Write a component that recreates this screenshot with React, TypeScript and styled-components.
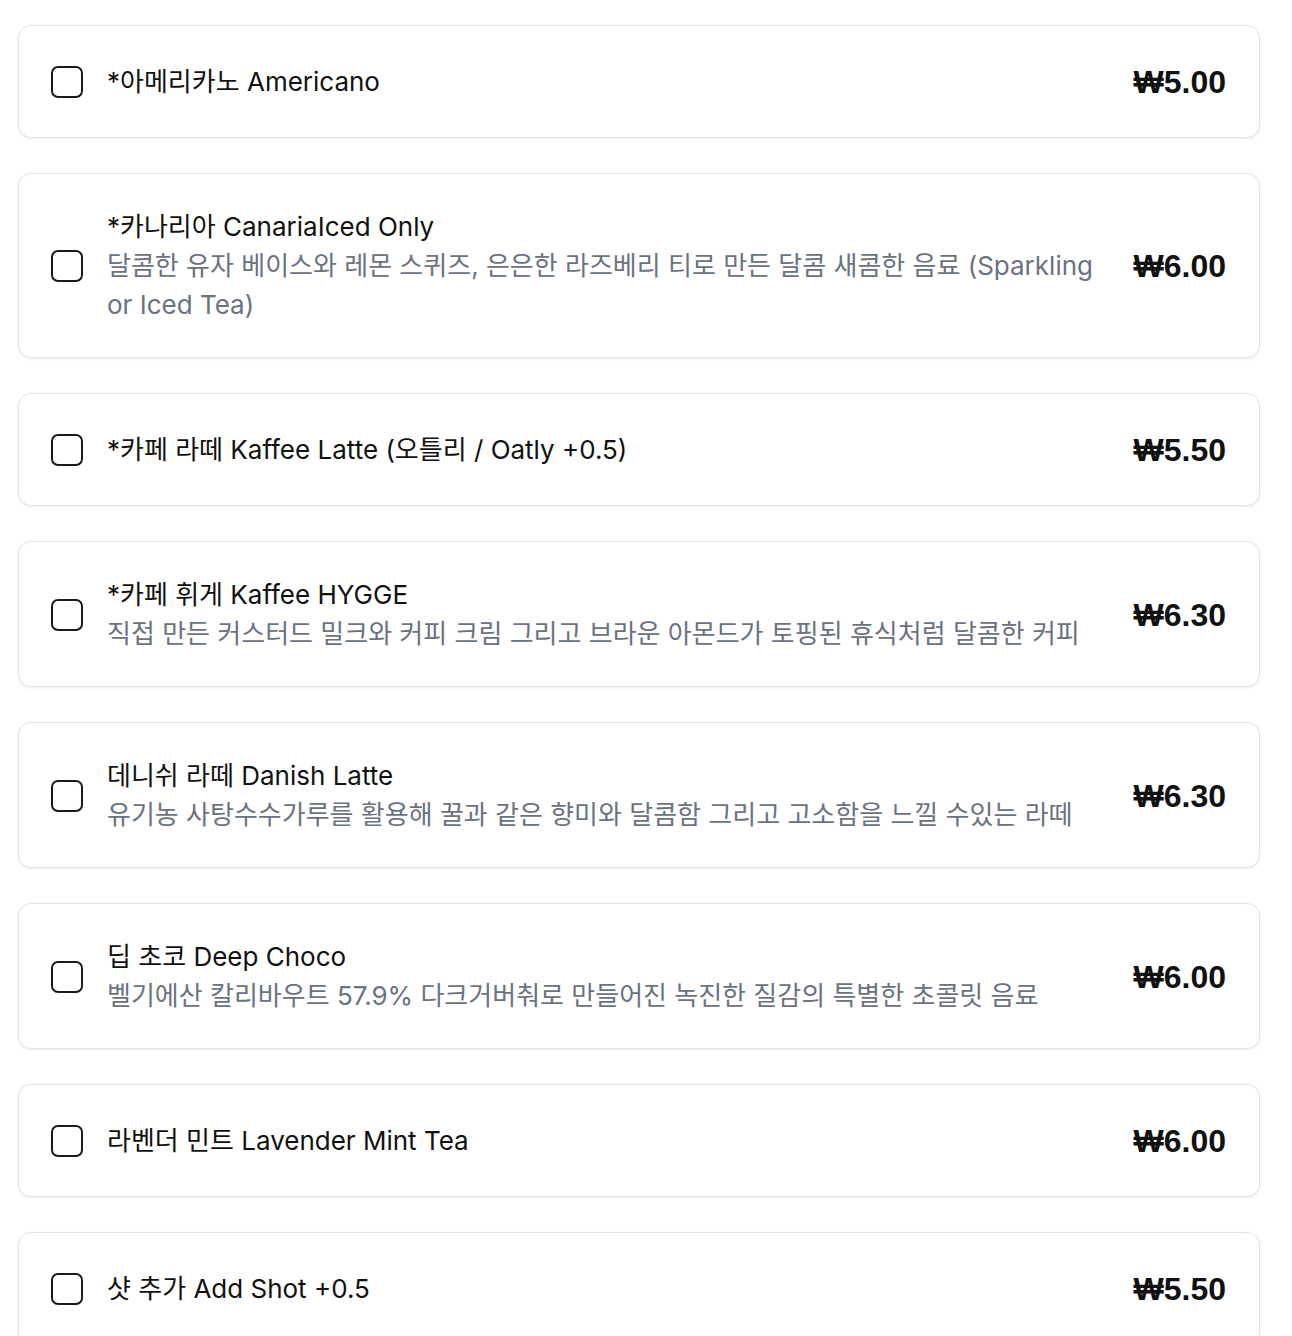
import React from "react";
import styled, { createGlobalStyle } from "styled-components";

const Global = createGlobalStyle`
  html, body { margin: 0; padding: 0; background: #ffffff; }
  body { font-family: Inter, "Noto Sans CJK KR", sans-serif; color: #111111; }
`;

const List = styled.div`
  display: flex;
  flex-direction: column;
  gap: 35px;
  padding: 25px 32px 40px 18px;
`;

const Card = styled.label`
  display: flex;
  align-items: center;
  gap: 24px;
  padding: 34px 33px 33px 32px;
  border: 1px solid #e4e4e4;
  border-radius: 13px;
  background: #ffffff;
  box-shadow: 0 1px 3px rgba(0, 0, 0, 0.07);
`;

const Box = styled.span`
  flex: 0 0 auto;
  width: 32px;
  height: 32px;
  box-sizing: border-box;
  border: 2px solid #1a1a1a;
  border-radius: 7px;
  background: #ffffff;
`;

const Info = styled.div`
  flex: 1 1 auto;
  display: flex;
  flex-direction: column;
  min-width: 0;
`;

const Title = styled.div`
  font-size: 26px;
  line-height: 38px;
  color: #111111;
`;

const Desc = styled.div`
  font-size: 26px;
  line-height: 39px;
  color: #6b7280;
`;

const Price = styled.div`
  flex: 0 0 auto;
  font-family: "Liberation Sans", Arial, sans-serif;
  font-size: 32px;
  line-height: 44px;
  font-weight: 700;
  color: #111111;
`;

type Item = { title: string; desc?: string; price: string };

const items: Item[] = [
  { title: "*아메리카노 Americano", price: "₩5.00" },
  {
    title: "*카나리아 CanariaIced Only",
    desc: "달콤한 유자 베이스와 레몬 스퀴즈, 은은한 라즈베리 티로 만든 달콤 새콤한 음료 (Sparkling or Iced Tea)",
    price: "₩6.00",
  },
  { title: "*카페 라떼 Kaffee Latte (오틀리 / Oatly +0.5)", price: "₩5.50" },
  {
    title: "*카페 휘게 Kaffee HYGGE",
    desc: "직접 만든 커스터드 밀크와 커피 크림 그리고 브라운 아몬드가 토핑된 휴식처럼 달콤한 커피",
    price: "₩6.30",
  },
  {
    title: "데니쉬 라떼 Danish Latte",
    desc: "유기농 사탕수수가루를 활용해 꿀과 같은 향미와 달콤함 그리고 고소함을 느낄 수있는 라떼",
    price: "₩6.30",
  },
  {
    title: "딥 초코 Deep Choco",
    desc: "벨기에산 칼리바우트 57.9% 다크거버춰로 만들어진 녹진한 질감의 특별한 초콜릿 음료",
    price: "₩6.00",
  },
  { title: "라벤더 민트 Lavender Mint Tea", price: "₩6.00" },
  { title: "샷 추가 Add Shot +0.5", price: "₩5.50" },
];

export default function App() {
  return (
    <>
      <Global />
      <List>
        {items.map((it, i) => (
          <Card key={i}>
            <Box />
            <Info>
              <Title>{it.title}</Title>
              {it.desc && <Desc>{it.desc}</Desc>}
            </Info>
            <Price>{it.price}</Price>
          </Card>
        ))}
      </List>
    </>
  );
}
